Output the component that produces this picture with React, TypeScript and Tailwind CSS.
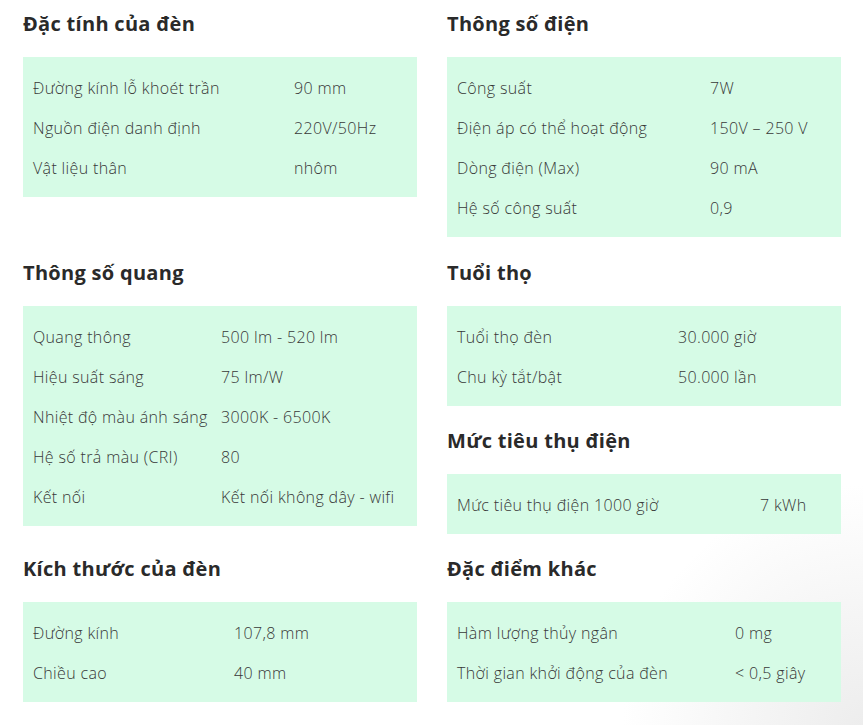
type Row = [string, string];

interface SpecBlockProps {
  title: string;
  rows: Row[];
  labelWidth: string;
}

function SpecBlock({ title, rows, labelWidth }: SpecBlockProps) {
  return (
    <div className="mb-[20px]">
      <h3 className="text-[20px] leading-[30px] font-bold tracking-[0.3px] text-[#2a2a2a] font-['Open_Sans',sans-serif]">{title}</h3>
      <div className="mt-[18px] bg-[#d6fbe6] px-[10px] pt-[11px] pb-[9px]">
        {rows.map(([label, value]) => (
          <div key={label} className="flex h-[40px] items-center whitespace-nowrap">
            <span className={`${labelWidth} shrink-0`}>{label}</span>
            <span>{value}</span>
          </div>
        ))}
      </div>
    </div>
  );
}

export default function App() {
  return (
    <div className="min-h-[725px] w-[863px] bg-white bg-[radial-gradient(circle_at_100%_100%,#ededed_0px,#f5f5f5_110px,#ffffff_240px)] pl-[23px] pr-[22px] pt-[9px] font-['Open_Sans',sans-serif] text-[16px] font-light tracking-[0.35px] text-[#383838]">
      <div className="grid grid-cols-2 items-start gap-x-[30px]">
        <SpecBlock
          title="Đặc tính của đèn"
          labelWidth="min-w-[261px]"
          rows={[
            ['Đường kính lỗ khoét trần', '90 mm'],
            ['Nguồn điện danh định', '220V/50Hz'],
            ['Vật liệu thân', 'nhôm'],
          ]}
        />
        <SpecBlock
          title="Thông số điện"
          labelWidth="min-w-[253px]"
          rows={[
            ['Công suất', '7W'],
            ['Điện áp có thể hoạt động', '150V – 250 V'],
            ['Dòng điện (Max)', '90 mA'],
            ['Hệ số công suất', '0,9'],
          ]}
        />

        <div className="pt-[1px]">
          <SpecBlock
            title="Thông số quang"
            labelWidth="min-w-[188px]"
            rows={[
              ['Quang thông', '500 lm - 520 lm'],
              ['Hiệu suất sáng', '75 lm/W'],
              ['Nhiệt độ màu ánh sáng', '3000K - 6500K'],
              ['Hệ số trả màu (CRI)', '80'],
              ['Kết nối', 'Kết nối không dây - wifi'],
            ]}
          />
        </div>
        <div className="pt-[1px]">
          <SpecBlock
            title="Tuổi thọ"
            labelWidth="min-w-[221px]"
            rows={[
              ['Tuổi thọ đèn', '30.000 giờ'],
              ['Chu kỳ tắt/bật', '50.000 lần'],
            ]}
          />
          <SpecBlock
            title="Mức tiêu thụ điện"
            labelWidth="min-w-[303px]"
            rows={[['Mức tiêu thụ điện 1000 giờ', '7 kWh']]}
          />
        </div>

        <SpecBlock
          title="Kích thước của đèn"
          labelWidth="min-w-[201px]"
          rows={[
            ['Đường kính', '107,8 mm'],
            ['Chiều cao', '40 mm'],
          ]}
        />
        <SpecBlock
          title="Đặc điểm khác"
          labelWidth="min-w-[278px]"
          rows={[
            ['Hàm lượng thủy ngân', '0 mg'],
            ['Thời gian khởi động của đèn', '< 0,5 giây'],
          ]}
        />
      </div>
    </div>
  );
}
